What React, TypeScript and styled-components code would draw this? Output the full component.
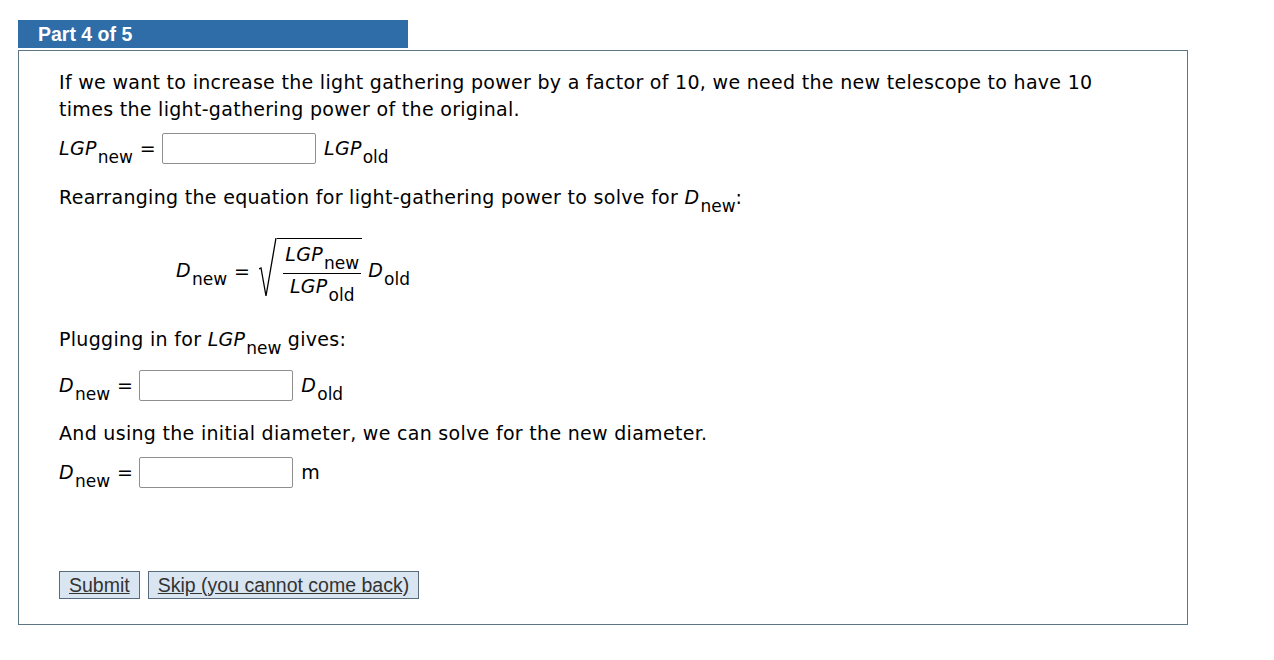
import styled, { createGlobalStyle } from 'styled-components';

const GlobalStyle = createGlobalStyle`
  body {
    margin: 0;
    background: #fff;
    font-family: 'DejaVu Sans', Verdana, sans-serif;
    color: #000;
  }
`;

const Page = styled.div`
  padding: 20px 18px;
`;

const Tab = styled.div`
  width: 390px;
  height: 28px;
  box-sizing: border-box;
  padding-left: 20px;
  background: #2f6da8;
  color: #fff;
  font-family: 'Liberation Sans', Arial, sans-serif;
  font-weight: bold;
  font-size: 19.5px;
  line-height: 28px;
`;

const Panel = styled.div`
  margin-top: 2px;
  width: 1170px;
  height: 575px;
  box-sizing: border-box;
  border: 1px solid #5e7585;
  padding: 18px 40px 0;
  font-size: 19px;
  letter-spacing: 0.3px;
  line-height: 27px;
`;

const Para = styled.p<{ $top?: number }>`
  margin: ${(p) => p.$top ?? 0}px 0 0;
`;

const Row = styled.div<{ $top: number }>`
  display: flex;
  align-items: center;
  margin-top: ${(p) => p.$top}px;
  height: 31px;
`;

const Var = styled.span`
  font-style: italic;
`;

const Sub = styled.span`
  font-size: 17px;
  letter-spacing: 0;
  position: relative;
  top: 8px;
  margin-left: 1px;
`;

const Eq = styled.span`
  margin: 0 6px 0 7px;
`;

const AnswerInput = styled.input`
  width: 154px;
  height: 31px;
  box-sizing: border-box;
  border: 1px solid #8f8f8f;
  border-radius: 2px;
  margin-right: 8px;
  padding: 0 4px;
`;

const Formula = styled.div`
  display: flex;
  align-items: center;
  margin: 19px 0 0 117px;
  height: 80px;
`;

const Radical = styled.div`
  display: flex;
  align-items: stretch;
  margin: 0 0 6px 3px;
  height: 60px;
`;

const RootBody = styled.div`
  border-top: 1px solid #000;
  padding: 0 1px 0 6px;
  display: flex;
  align-items: center;
`;

const Fraction = styled.div`
  display: flex;
  flex-direction: column;
  align-items: center;
  margin-top: 2px;
`;

const Numer = styled.div`
  line-height: 26px;
  padding: 0 2px 5px;
  border-bottom: 1px solid #000;
`;

const Denom = styled.div`
  line-height: 24px;
`;

const Tail = styled.span`
  margin-left: 6px;
`;

const Buttons = styled.div`
  display: flex;
  gap: 8px;
  margin-top: 83px;
`;

const Button = styled.button`
  height: 28px;
  padding: 0 9px;
  background: #d9e5f1;
  border: 1px solid #5b6b7e;
  color: #333;
  font-family: 'Liberation Sans', Arial, sans-serif;
  font-size: 19.5px;
  letter-spacing: 0;
  text-decoration: underline;
  cursor: pointer;
`;

function Sym({ v, s }: { v: string; s: string }) {
  return (
    <span>
      <Var>{v}</Var>
      <Sub>{s}</Sub>
    </span>
  );
}

export default function App() {
  return (
    <>
      <GlobalStyle />
      <Page>
        <Tab>Part 4 of 5</Tab>
        <Panel>
          <Para>
            If we want to increase the light gathering power by a factor of 10, we need the new
            telescope to have 10 times the light-gathering power of the original.
          </Para>
          <Row $top={10}>
            <Sym v="LGP" s="new" />
            <Eq>=</Eq>
            <AnswerInput />
            <Sym v="LGP" s="old" />
          </Row>
          <Para $top={20}>
            Rearranging the equation for light-gathering power to solve for <Sym v="D" s="new" />:
          </Para>
          <Formula>
            <Sym v="D" s="new" />
            <Eq>=</Eq>
            <Radical>
              <svg width="18" height="60" viewBox="0 0 18 60">
                <path d="M0 31 L2 30 L7 58 L17 0" fill="none" stroke="#000" strokeWidth="1.3" />
              </svg>
              <RootBody>
                <Fraction>
                  <Numer>
                    <Sym v="LGP" s="new" />
                  </Numer>
                  <Denom>
                    <Sym v="LGP" s="old" />
                  </Denom>
                </Fraction>
              </RootBody>
            </Radical>
            <Tail>
              <Sym v="D" s="old" />
            </Tail>
          </Formula>
          <Para $top={15}>
            Plugging in for <Sym v="LGP" s="new" /> gives:
          </Para>
          <Row $top={16}>
            <Sym v="D" s="new" />
            <Eq>=</Eq>
            <AnswerInput />
            <Sym v="D" s="old" />
          </Row>
          <Para $top={19}>And using the initial diameter, we can solve for the new diameter.</Para>
          <Row $top={10}>
            <Sym v="D" s="new" />
            <Eq>=</Eq>
            <AnswerInput />
            <span>m</span>
          </Row>
          <Buttons>
            <Button>Submit</Button>
            <Button>Skip (you cannot come back)</Button>
          </Buttons>
        </Panel>
      </Page>
    </>
  );
}
